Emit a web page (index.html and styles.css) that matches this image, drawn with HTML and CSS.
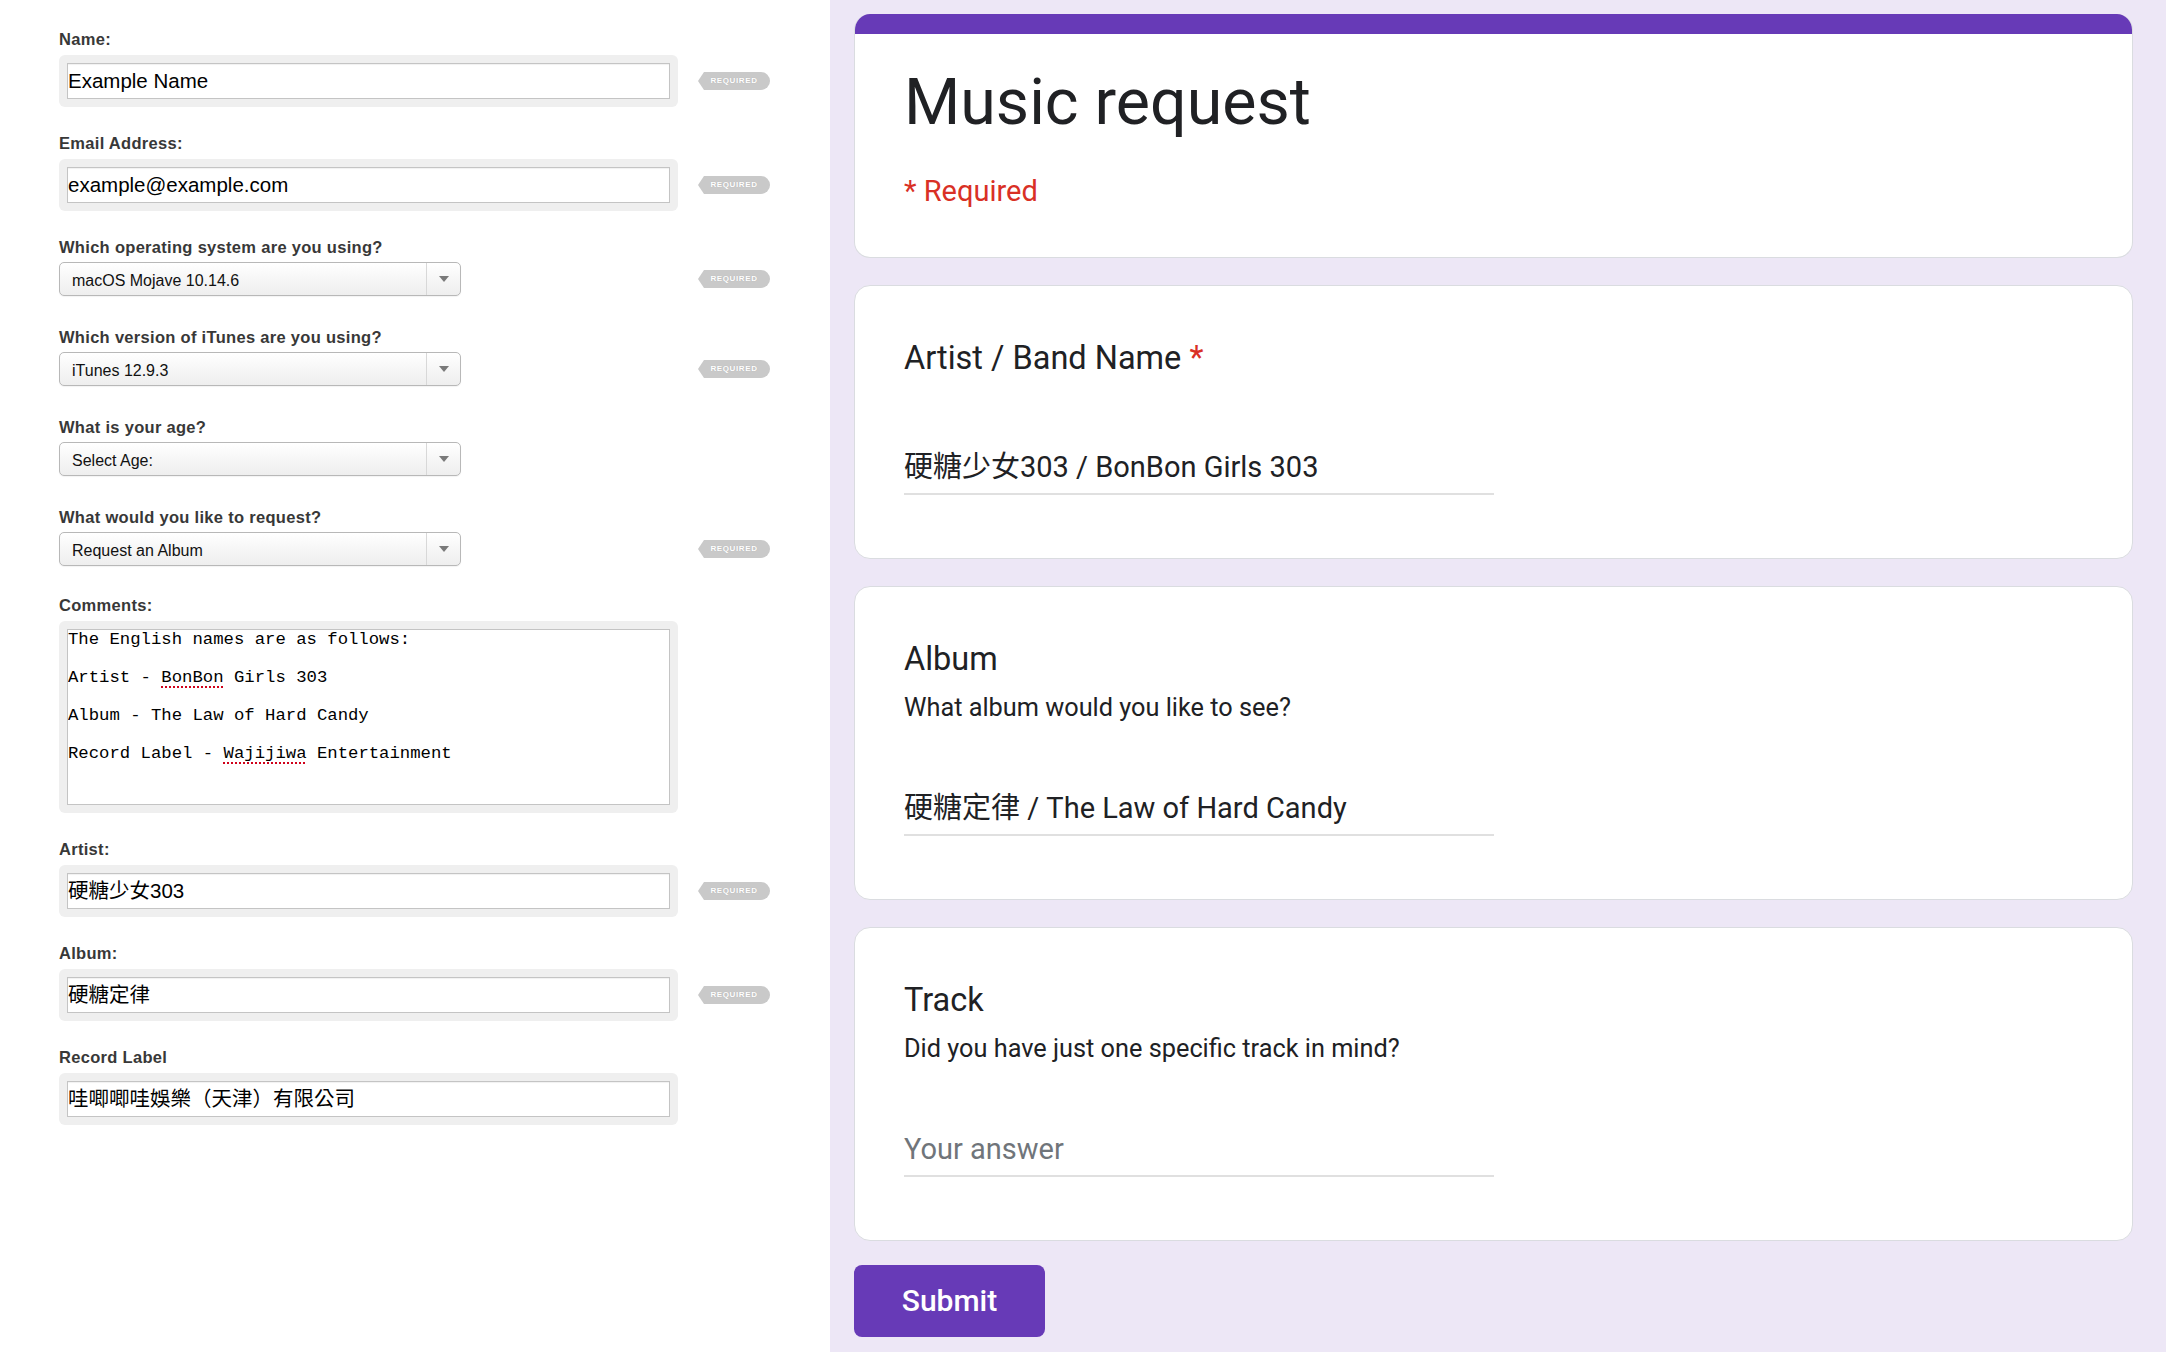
FILE: index.html
```html
<!DOCTYPE html>
<html lang="en">
<head>
    <meta charset="UTF-8">
    <title>Music request</title>
    <link rel="stylesheet" href="styles.css">
</head>
<body>
<div class="page">
    <div class="legacy">
        <div class="field">
            <span class="label">Name:</span>
            <div class="row">
                <div class="slot"><div class="box"><div class="input">Example Name</div></div></div>
                <span class="badge">REQUIRED</span>
            </div>
        </div>
        <div class="field">
            <span class="label">Email Address:</span>
            <div class="row">
                <div class="slot"><div class="box"><div class="input">example@example.com</div></div></div>
                <span class="badge">REQUIRED</span>
            </div>
        </div>
        <div class="field pick">
            <span class="label">Which operating system are you using?</span>
            <div class="row">
                <div class="slot"><div class="select"><span class="value">macOS Mojave 10.14.6</span><span class="arrow"></span></div></div>
                <span class="badge">REQUIRED</span>
            </div>
        </div>
        <div class="field pick">
            <span class="label">Which version of iTunes are you using?</span>
            <div class="row">
                <div class="slot"><div class="select"><span class="value">iTunes 12.9.3</span><span class="arrow"></span></div></div>
                <span class="badge">REQUIRED</span>
            </div>
        </div>
        <div class="field pick">
            <span class="label">What is your age?</span>
            <div class="row">
                <div class="slot"><div class="select"><span class="value">Select Age:</span><span class="arrow"></span></div></div>
            </div>
        </div>
        <div class="field pick last">
            <span class="label">What would you like to request?</span>
            <div class="row">
                <div class="slot"><div class="select"><span class="value">Request an Album</span><span class="arrow"></span></div></div>
                <span class="badge">REQUIRED</span>
            </div>
        </div>
        <div class="field">
            <span class="label">Comments:</span>
            <div class="row">
                <div class="slot"><div class="box"><div class="area"><div class="line">The English names are as follows:</div><div class="line"></div><div class="line">Artist - <u class="typo">BonBon</u> Girls 303</div><div class="line"></div><div class="line">Album - The Law of Hard Candy</div><div class="line"></div><div class="line">Record Label - <u class="typo">Wajijiwa</u> Entertainment</div></div></div></div>
            </div>
        </div>
        <div class="field">
            <span class="label">Artist:</span>
            <div class="row">
                <div class="slot"><div class="box"><div class="input">硬糖少女303</div></div></div>
                <span class="badge">REQUIRED</span>
            </div>
        </div>
        <div class="field">
            <span class="label">Album:</span>
            <div class="row">
                <div class="slot"><div class="box"><div class="input">硬糖定律</div></div></div>
                <span class="badge">REQUIRED</span>
            </div>
        </div>
        <div class="field">
            <span class="label">Record Label</span>
            <div class="row">
                <div class="slot"><div class="box"><div class="input">哇唧唧哇娛樂（天津）有限公司</div></div></div>
            </div>
        </div>
    </div>

    <div class="gform">
        <div class="card head">
            <div class="band"></div>
            <div class="head-inner">
                <h1 class="title">Music request</h1>
                <div class="req">* Required</div>
            </div>
        </div>
        <div class="card">
            <div class="q-title">Artist / Band Name <span class="star">*</span></div>
            <div class="answer">硬糖少女303 / BonBon Girls 303</div>
        </div>
        <div class="card">
            <div class="q-title">Album</div>
            <div class="q-desc">What album would you like to see?</div>
            <div class="answer">硬糖定律 / The Law of Hard Candy</div>
        </div>
        <div class="card last">
            <div class="q-title">Track</div>
            <div class="q-desc">Did you have just one specific track in mind?</div>
            <div class="answer empty">Your answer</div>
        </div>
        <div class="submit">Submit</div>
    </div>
</div>
</body>
</html>
```

FILE: styles.css
```css
body{margin:0; font-family:"Liberation Sans", Arial, "Noto Sans CJK TC", sans-serif;}
.page{display:grid; grid-template-columns:830px 1fr; min-height:1352px;}

/* old style form on the left */
.legacy{background:#fff; padding:29px 0 0 59px;}
.field{margin-bottom:26px;}
.field.pick{margin-bottom:31px;}
.field.last{margin-bottom:29px;}
.label{display:block; font:bold 16.5px/20px "Liberation Sans", Arial, sans-serif; letter-spacing:.3px; color:#383838; margin-bottom:6px;}
.pick .label{margin-bottom:5px;}
.row{display:flex; align-items:center;}
.slot{width:619px;}
.box{background:#efefef; border-radius:6px; padding:8px;}
.input{height:34px; border:1px solid #c4c4c4; background:#fff; padding:0; font:20.5px/34px "Liberation Sans", Arial, "Noto Sans CJK TC", sans-serif; color:#000; white-space:nowrap; overflow:hidden; box-shadow:inset 0 1px 1px rgba(0,0,0,.06);}
.area{height:174px; border:1px solid #c4c4c4; background:#fff; padding:0; font:17.3px/19px "Liberation Mono", "Courier New", monospace; color:#000; white-space:pre; overflow:hidden;}
.area .line{height:19px;}
.typo{text-decoration:underline dotted #d0021b; text-decoration-thickness:2px; text-underline-offset:4px;}
.select{width:402px; height:34px; box-sizing:border-box; border:1px solid #b8b8b8; border-radius:5px; background:linear-gradient(#ffffff, #eeeeee); display:flex; align-items:center; font:16px "Liberation Sans", Arial, sans-serif; color:#111; box-shadow:0 1px 1px rgba(0,0,0,.05);}
.select .value{flex:1; padding:3px 0 0 12px;}
.select .arrow{width:33px; height:100%; border-left:1px solid #d8d8d8; display:flex; align-items:center; justify-content:center;}
.select .arrow::after{content:""; border-left:5px solid transparent; border-right:5px solid transparent; border-top:6px solid #7a7a7a;}
.badge{position:relative; margin-left:26px; width:66px; height:18px; background:#c9c9c9; border-radius:0 9px 9px 0; color:#fff; font:bold 8px/18px "Liberation Sans", Arial, sans-serif; letter-spacing:.6px; text-align:center; text-indent:-6px; text-shadow:0 0 1px rgba(0,0,0,.15);}
.badge::before{content:""; position:absolute; left:-6px; top:0; border-right:6px solid #c9c9c9; border-top:9px solid transparent; border-bottom:9px solid transparent;}

/* google form on the right */
.gform{background:#ede7f6; padding:14px 33px 0 24px; font-family:Roboto, "Noto Sans CJK TC", sans-serif; color:#202124;}
.card{background:#fff; border:1px solid #dadce0; border-radius:16px; margin-bottom:27px; padding:47px 49px 63px;}
.card.last{margin-bottom:24px;}
.card.head{padding:0; border-top:0; overflow:hidden;}
.band{height:20px; background:#673ab7;}
.head-inner{padding:29px 49px 46px;}
.title{margin:0; font-weight:400; font-size:64.5px; line-height:78px;}
.req{margin-top:30px; font-size:29px; line-height:40px; color:#d93025;}
.q-title{font-size:32.5px; line-height:50px;}
.star{color:#d93025;}
.q-desc{margin-top:8px; font-size:25.3px; line-height:32px;}
.answer{margin-top:63px; width:50%; height:41px; padding-bottom:6px; border-bottom:2px solid #e0e0e0; font-size:29px; line-height:42px; white-space:nowrap;}
.answer.empty{color:#70757a;}
.submit{width:191px; height:72px; border-radius:8px; background:#673ab7; color:#fff; font-size:30px; font-weight:500; line-height:72px; text-align:center;}
```
